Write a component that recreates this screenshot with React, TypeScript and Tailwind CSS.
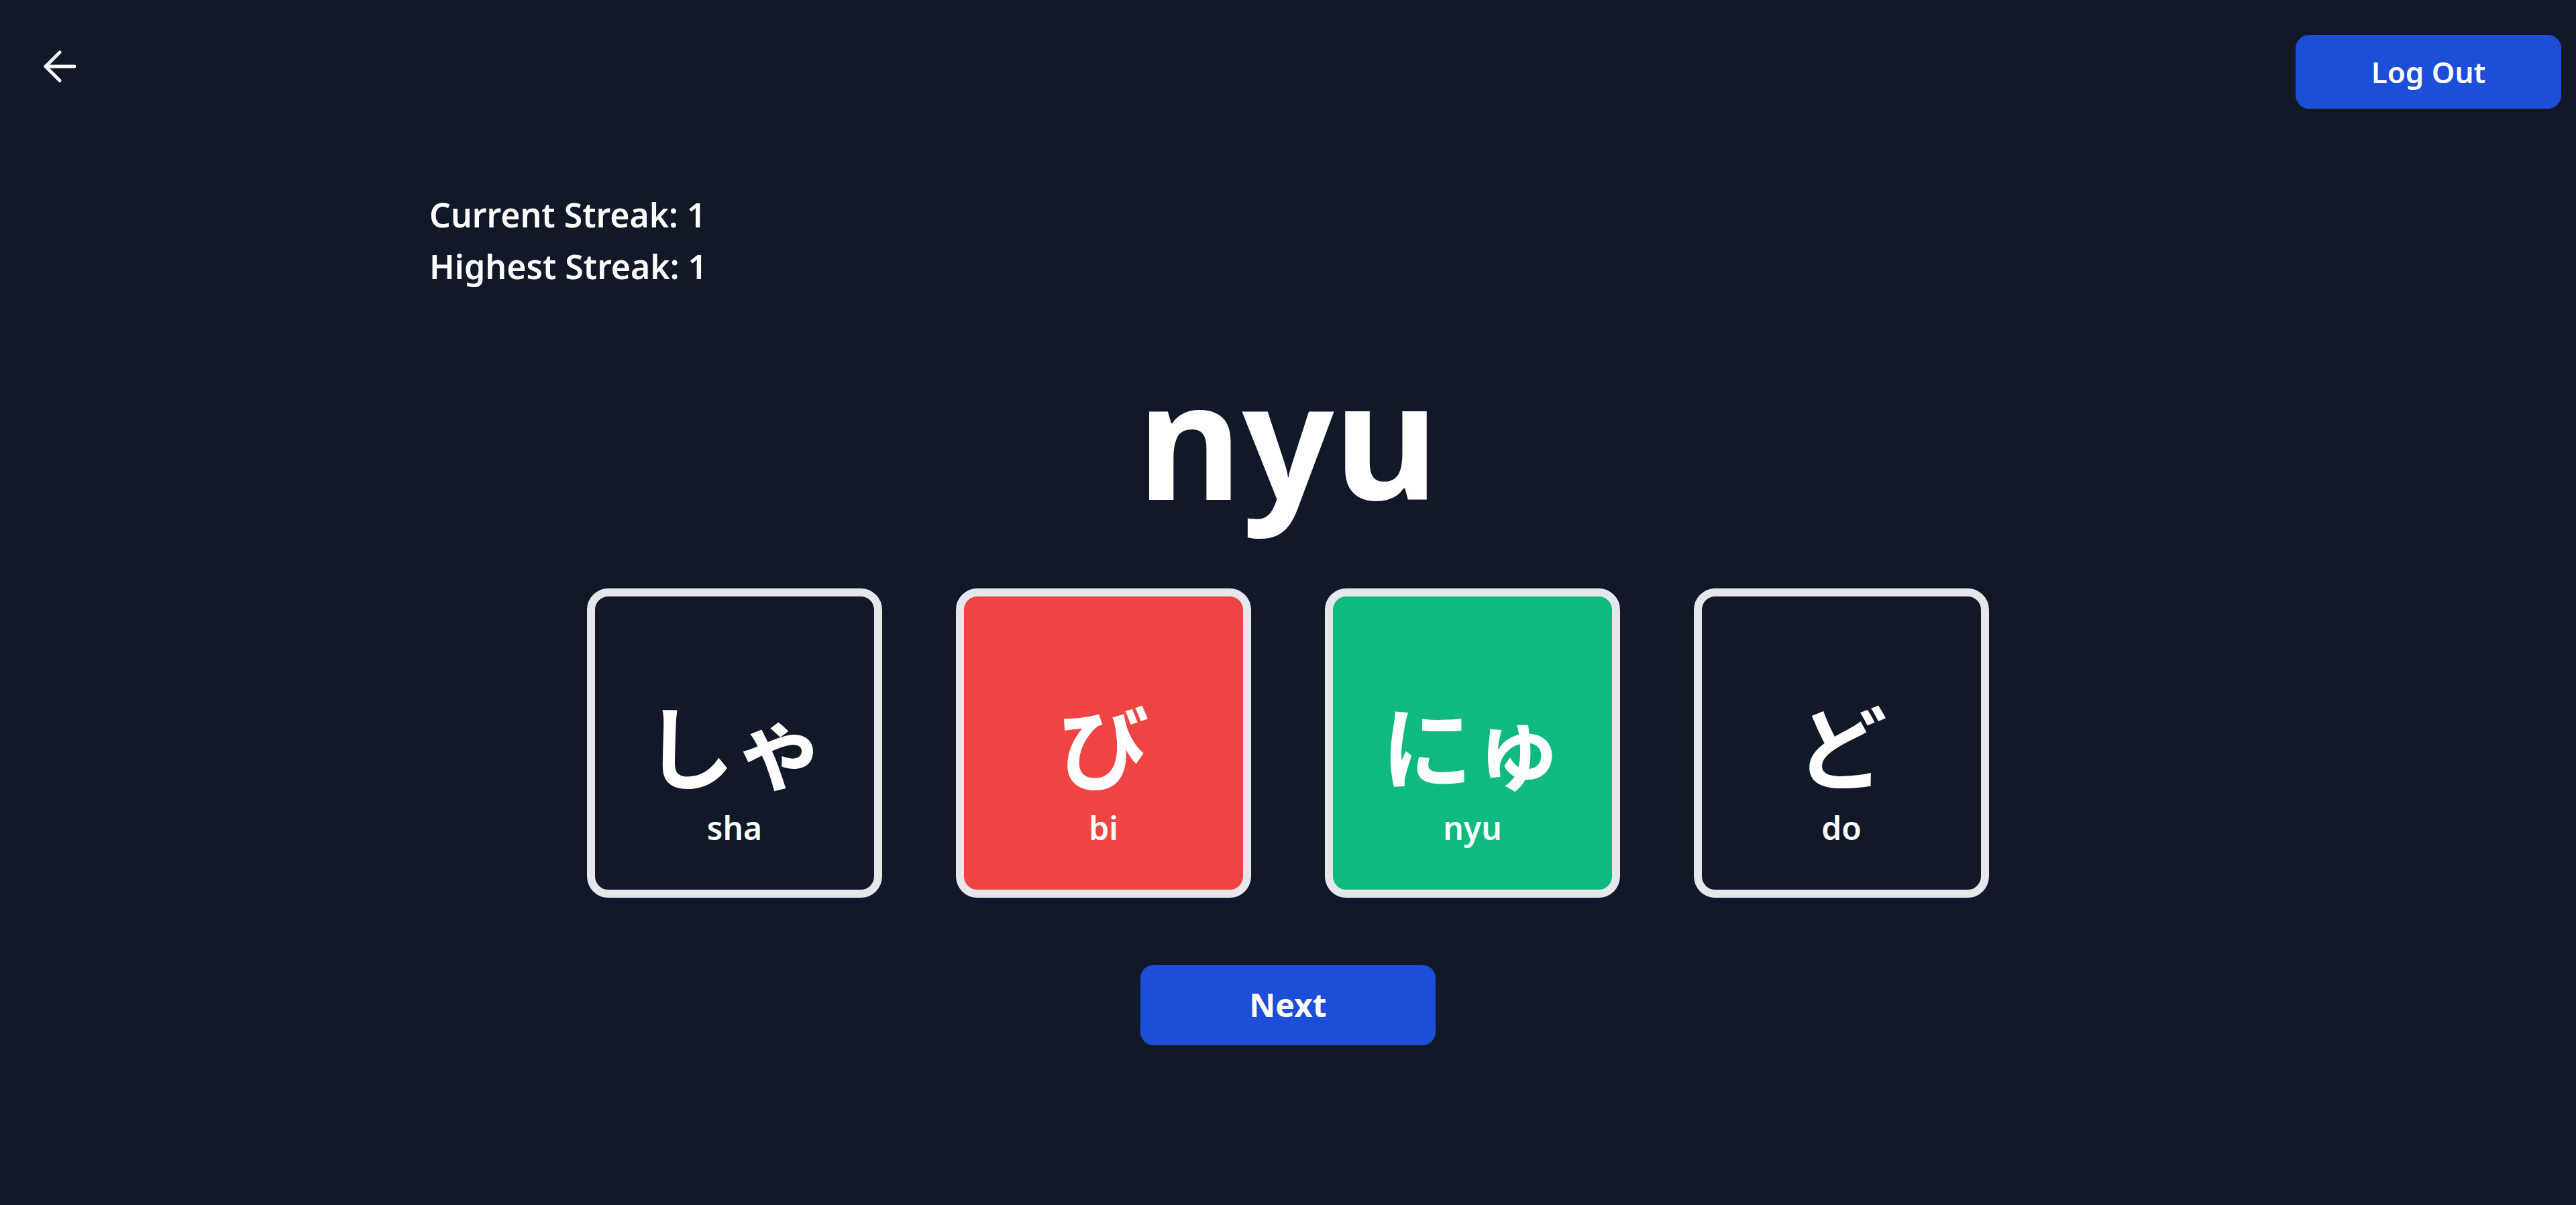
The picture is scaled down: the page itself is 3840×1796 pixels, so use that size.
import { useState } from "react";

type Opcao = { kana: string; romaji: string };

const opcoes: Opcao[] = [
  { kana: "しゃ", romaji: "sha" },
  { kana: "び", romaji: "bi" },
  { kana: "にゅ", romaji: "nyu" },
  { kana: "ど", romaji: "do" },
];

function SetaVoltar() {
  return (
    <svg width="48" height="48" viewBox="0 0 48 48" fill="none" stroke="white" strokeWidth="5" strokeLinecap="round" strokeLinejoin="round">
      <path d="M24 3 L3 24 L24 45" />
      <path d="M3 24 H46" />
    </svg>
  );
}

function CartaoKana({
  opcao,
  estado,
}: {
  opcao: Opcao;
  estado: "neutro" | "errado" | "certo";
}) {
  const fundo =
    estado === "errado" ? "bg-[#ef4444]" : estado === "certo" ? "bg-[#10b981]" : "bg-[#111827]";

  return (
    <button
      type="button"
      className={`flex h-[461px] w-[440px] flex-col items-center justify-center rounded-[32px] border-[12px] border-[#e5e7eb] pt-[82px] text-white ${fundo}`}
    >
      <span className="text-[136px] leading-none font-bold [font-family:'Noto_Sans_CJK_JP',sans-serif]">
        {opcao.kana}
      </span>
      <span className="mt-[34px] text-[48px] leading-none font-semibold">{opcao.romaji}</span>
    </button>
  );
}

export default function App() {
  const [streak] = useState({ atual: 1, maior: 1 });

  return (
    <div className="min-h-screen bg-[#111827] text-white [font-family:'Noto_Sans','Noto_Sans_CJK_JP',sans-serif]">
      <header className="flex items-start justify-between px-[22px] pt-[52px]">
        <button type="button" className="mt-[23px] ml-[43px]">
          <SetaVoltar />
        </button>
        <button
          type="button"
          className="h-[110px] w-[396px] rounded-[20px] bg-[#1d4ed8] text-[44px] font-semibold text-white"
        >
          Log Out
        </button>
      </header>

      <main className="mx-auto flex max-w-[2560px] flex-col">
        <div className="mt-[120px] text-[50px] leading-[77px] font-semibold">
          <p>Current Streak: {streak.atual}</p>
          <p>Highest Streak: {streak.maior}</p>
        </div>

        <h1 className="mt-[96px] text-center text-[240px] leading-none font-bold">nyu</h1>

        <div className="mt-[105px] flex justify-center gap-[110px]">
          {opcoes.map((o) => (
            <CartaoKana
              key={o.romaji}
              opcao={o}
              estado={o.romaji === "bi" ? "errado" : o.romaji === "nyu" ? "certo" : "neutro"}
            />
          ))}
        </div>

        <div className="mt-[100px] flex justify-center">
          <button
            type="button"
            className="h-[120px] w-[440px] rounded-[20px] bg-[#1d4ed8] text-[48px] font-bold text-white"
          >
            Next
          </button>
        </div>
      </main>
    </div>
  );
}
